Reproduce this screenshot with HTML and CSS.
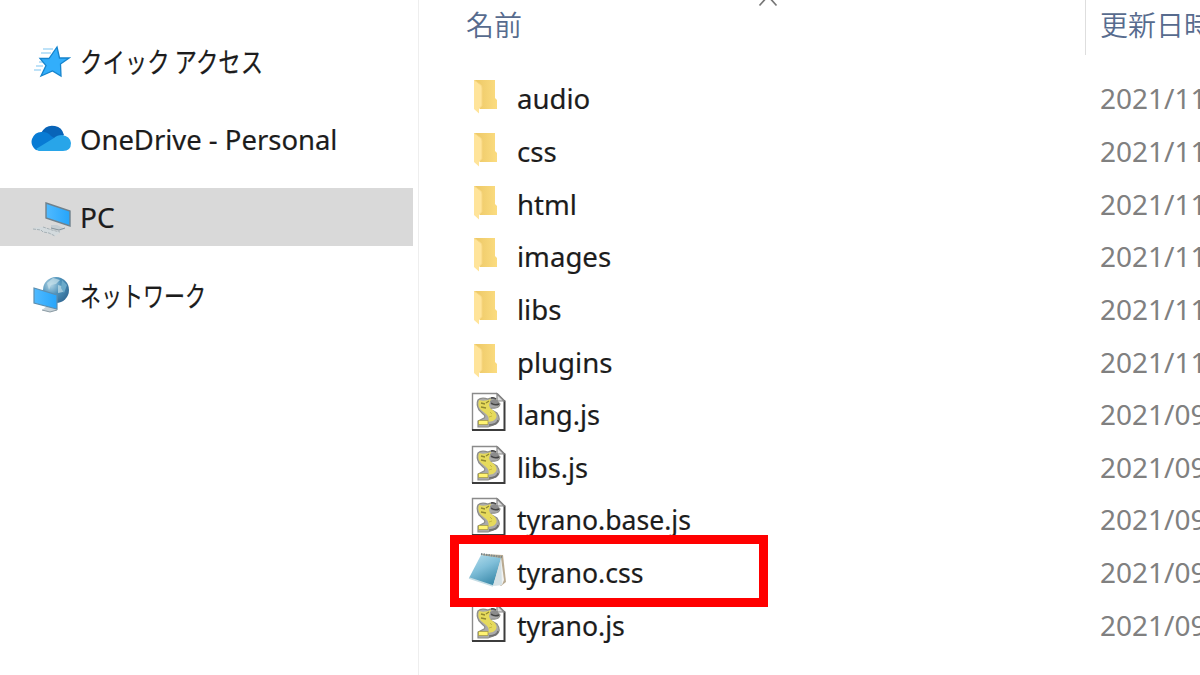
FILE: index.html
```html
<!DOCTYPE html>
<html lang="ja">
<head>
<meta charset="utf-8">
<title>tyrano</title>
<link rel="stylesheet" href="styles.css">
</head>
<body>
<svg class="defs" width="0" height="0" aria-hidden="true">
  <defs>
    <linearGradient id="fold" x1="0" x2="1"><stop offset="0" stop-color="#ecc765"/><stop offset="1" stop-color="#fbdc80"/></linearGradient>
    <linearGradient id="note" x1="0" y1="0" x2="0.5" y2="1"><stop offset="0" stop-color="#b9e0ee"/><stop offset="0.5" stop-color="#80bfd9"/><stop offset="1" stop-color="#408eae"/></linearGradient>
    <linearGradient id="screen" x1="0" x2="1"><stop offset="0" stop-color="#50baff"/><stop offset="1" stop-color="#26a5fb"/></linearGradient>
    <radialGradient id="globe" cx=".3" cy=".3" r=".8"><stop offset="0" stop-color="#b3d5e5"/><stop offset=".5" stop-color="#4d91b9"/><stop offset="1" stop-color="#326a95"/></radialGradient>
    <symbol id="folder" viewBox="0 0 26 36">
      <path d="M1 1h21v18l2 2v9H7z" fill="url(#fold)"/>
      <path d="M1 1l7 5q1 1 1 3v18l-3 3v4.500L1 30z" fill="#ffe49a"/>
      <path d="M2 1.500l6 4.500q1 1 1 3v18l-2.500 2" fill="none" stroke="#f7d680" stroke-width="1"/>
    </symbol>
    <symbol id="script" viewBox="0 0 36 40">
      <path d="M1.500 1.500H26L33 9v28.500H1.500z" fill="#fff"/>
      <path d="M1.500 38V1.500H26" fill="none" stroke="#8b8b8b" stroke-width="1.400"/>
      <path d="M26 1.500L33.500 9" fill="none" stroke="#777" stroke-width="1.600"/>
      <path d="M33.500 8.500V38H1" fill="none" stroke="#3c3c3c" stroke-width="2"/>
      <path d="M26 2v7h7z" fill="#ddd" stroke="#888" stroke-width="1.200"/>
      <path d="M7 8q3-3 10-1 4-2 8 1l4 4q-1 5-8 4l-2 1 7 4q5 7-1 11l-8 3H7v-6l6-3q2-2-1-4l-4-4q-3-6-1-10z" fill="#aaa" stroke="#8d8d88" stroke-width="1.200"/>
      <path d="M8 8q5 2 12-1l-2 6 1 3 5 4q4 6-2 9l-5 1q2-5-2-8l-5-4q-4-4-2-10z" fill="#e6da5c"/>
      <path d="M7.500 28.500h9.500v4H7.500z" fill="#fff372" stroke="#a0963c" stroke-width=".7"/>
      <path d="M19 9q5-3 8 0l1 3q-2 2-8 1z" fill="#8c8c8c"/>
      <path d="M20 11q4 3 8 1M20 6q3-1 5 1" fill="none" stroke="#444" stroke-width="1.500"/>
      <path d="M18 33q8 0 9-5" fill="none" stroke="#707070" stroke-width="1.500"/>
      <path d="M10 11l4 1M15 11l3-2M10 15l5 1" stroke="#918931" stroke-width="1.300"/>
      <path d="M19 20l2 2M18 25l3-1" stroke="#c5b83f" stroke-width="1"/>
    </symbol>
  </defs>
</svg>
<div class="explorer">
  <nav class="sidebar">
    <a class="place"><svg class="place-icon" viewBox="0 0 40 40">
      <path d="M12 8h10M10 12h10M5 25h7M3 29h7M8 21h4" stroke="#a9d9f6" stroke-width="1.500"/>
      <path d="M26 6l2.500 11h9.500l-8.500 6 .5 12-8.500-5-11.500 5 5-10.500-6-7h9z" fill="#32aefb" stroke="#1684cd" stroke-width="1.300"/></svg><span class="label kana quick">クイック アクセス</span></a>
    <a class="place"><svg class="place-icon" viewBox="0 0 40 40">
      <path d="M10 14Q15 5 24 7q7 1 9 9l-8 6z" fill="#0864b8"/>
      <path d="M5 31Q-1 26 1 20q3-8 11-7 5 0 8 4l10 6-19 9z" fill="#087bd4"/>
      <path d="M5 30L23 19q3-3 8-3 8 1 9 8 0 8-8 8H8z" fill="#28a5e9"/></svg><span class="label onedrive">OneDrive - Personal</span></a>
    <a class="place selected"><svg class="place-icon" viewBox="0 0 40 40">
      <path d="M1 31l10-1 19 5-6 4z" fill="#d3dadd"/><path d="M2 32l8 1 2 2 6 1 6 3M12 30l9 3 8 2" stroke="#a7b1b6" stroke-width="1" stroke-dasharray="3 1" fill="none"/>
      <path d="M20 28l6 0 8 4-6 2-8-2z" fill="#c5cdd2"/><path d="M20 31l8 2 6-2" fill="none" stroke="#87959d"/>
      <path d="M15 6l24 8v15l-24-8z" fill="url(#screen)" stroke="#70818c" stroke-width="1.400"/></svg><span class="label">PC</span></a>
    <a class="place"><svg class="place-icon" viewBox="0 0 40 40">
      <circle cx="25" cy="15" r="13" fill="url(#globe)"/><path d="M16 8l6-5 7 2-4 4-5 1-2 5zM27 10l7 2-2 5-5 1z" fill="#c5e0e9" opacity=".7"/><path d="M31 5l5 5-3 8-3-5z" fill="#6baaca"/>
      <path d="M16 31l8 1 3 3-8 2-8-2z" fill="#c7d2d8"/><path d="M11 35l8 2 7-2" fill="none" stroke="#8b9ba4"/>
      <path d="M3 13l23 7v14L3 28z" fill="url(#screen)" stroke="#5c8eaf" stroke-width="1.200"/></svg><span class="label kana network">ネットワーク</span></a>
  </nav>
  <main class="files">
    <div class="header">
      <div class="column-name"><span>名前</span><svg class="sort" viewBox="0 0 20 7"><path d="M1.500 5.500L10-4l8.500 9.500" fill="none" stroke="#777" stroke-width="1.700"/></svg></div>
      <div class="column-date">更新日時</div>
    </div>
    <div class="rows">
      <div class="row"><svg class="folder"><use href="#folder"/></svg><span class="name">audio</span><span class="date">2021/11</span></div>
      <div class="row"><svg class="folder"><use href="#folder"/></svg><span class="name">css</span><span class="date">2021/11</span></div>
      <div class="row"><svg class="folder"><use href="#folder"/></svg><span class="name">html</span><span class="date">2021/11</span></div>
      <div class="row"><svg class="folder"><use href="#folder"/></svg><span class="name">images</span><span class="date">2021/11</span></div>
      <div class="row"><svg class="folder"><use href="#folder"/></svg><span class="name">libs</span><span class="date">2021/11</span></div>
      <div class="row"><svg class="folder"><use href="#folder"/></svg><span class="name">plugins</span><span class="date">2021/11</span></div>
      <div class="row"><svg class="script"><use href="#script"/></svg><span class="name short">lang.js</span><span class="date">2021/09</span></div>
      <div class="row"><svg class="script"><use href="#script"/></svg><span class="name short">libs.js</span><span class="date">2021/09</span></div>
      <div class="row"><svg class="script"><use href="#script"/></svg><span class="name tight">tyrano.base.js</span><span class="date">2021/09</span></div>
      <div class="row marked"><svg class="notepad" viewBox="0 0 40 38">
        <path d="M14 3l21 1 3 27-5 4-6-5z" fill="#b9aa91"/><path d="M33 7l3 22-2 5-9 1z" fill="#f1f3f3"/>
        <path d="M13 4l20 3-8 28L1 27z" fill="url(#note)"/><path d="M33 7l-8 28 9-1z" fill="#d5e1e5"/>
        <path d="M13 3l21 3" stroke="#7a898d" stroke-width="2" stroke-dasharray="1.500 1"/><path d="M1 27l24 8" stroke="#c5dde5" stroke-width="1.500"/></svg><span class="name tight">tyrano.css</span><span class="date">2021/09</span></div>
      <div class="row"><svg class="script"><use href="#script"/></svg><span class="name tight">tyrano.js</span><span class="date">2021/09</span></div>
    </div>
  </main>
</div>
</body>
</html>
```
FILE: styles.css
```css
* { box-sizing: border-box; }
body { margin: 0; background: #fff; color: #1c1c1c; font: 28px/40px "Noto Sans", "Noto Sans CJK JP", sans-serif; overflow: hidden; }
.defs { position: absolute; }
.explorer { display: flex; width: 1200px; height: 675px; overflow: hidden; }
.sidebar { flex: 0 0 419px; border-right: 1px solid #eee; padding: 32px 5px 0 0; display: flex; flex-direction: column; gap: 20px; }
.place { height: 58px; flex: none; display: flex; align-items: center; padding-left: 31px; gap: 9px; white-space: nowrap; }
.selected { background: #d9d9d9; }
.place-icon { width: 40px; height: 40px; flex: none; }
.label { transform-origin: left center; -webkit-text-stroke: 0.2px; }
.kana { font-family: "Noto Sans CJK JP", sans-serif; }
.quick { transform: scaleX(.8); }
.onedrive { transform: scaleX(.98); }
.network { transform: scaleX(.75); }
.files { flex: 0 0 781px; overflow: hidden; }
.header { display: flex; height: 55px; color: #576b8e; font-family: "Noto Sans CJK JP", sans-serif; font-weight: 350; }
.column-name { flex: 0 0 667px; border-right: 1px solid #dedede; padding: 4px 0 0 47px; display: flex; }
.sort { width: 20px; height: 7px; margin: -4px 0 0 236px; }
.column-date { padding: 4px 0 0 14px; white-space: nowrap; }
.rows { padding-top: 17px; }
.row { display: grid; grid-template-columns: 46px 583px 1fr; height: 52.65px; align-items: center; padding-left: 52px; position: relative; }
.folder { width: 26px; height: 36px; margin: -2px 0 0 2px; }
.script { width: 36px; height: 40px; margin-top: -4px; }
.notepad { width: 40px; height: 38px; margin: -5px 0 0 -3px; }
.name, .date { white-space: nowrap; transform-origin: left center; justify-self: start; }
.name { transform: scaleX(.985); -webkit-text-stroke: 0.2px; }
.name.short { transform: scaleX(.97); }
.name.tight { transform: scaleX(.95); }
.date { color: #808080; }
.marked::after { content: ""; box-sizing: border-box; position: absolute; left: 31px; top: -11px; width: 318px; height: 72px; border: 9px solid #f00; z-index: 1; }
```
